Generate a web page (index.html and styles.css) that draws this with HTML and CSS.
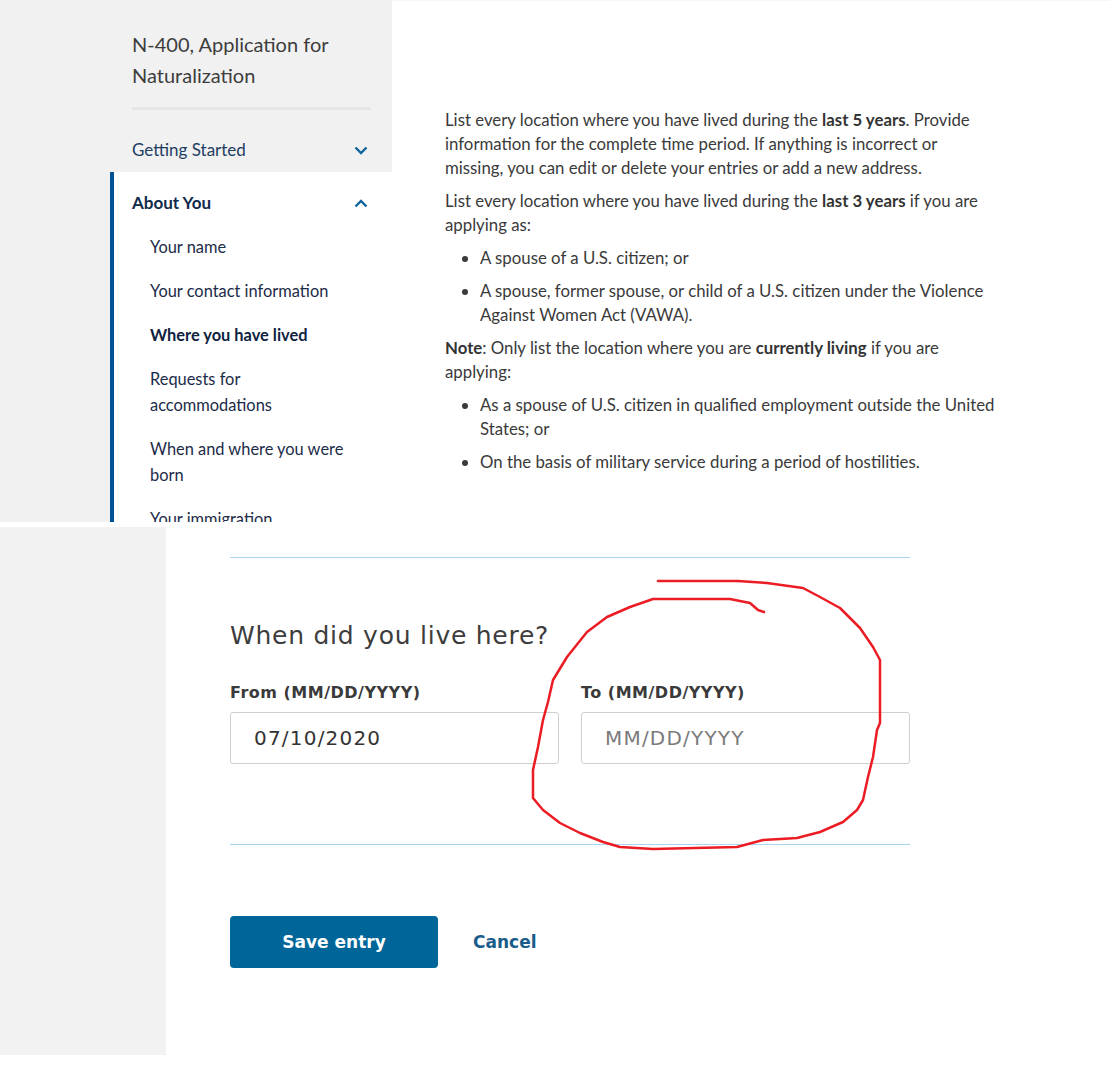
FILE: index.html
```html
<!DOCTYPE html>
<html lang="en">

<head>
    <meta charset="utf-8" />
    <meta name="viewport" content="width=device-width, initial-scale=1.0" />
    <title>N-400, Application for Naturalization</title>
    <link rel="stylesheet" href="styles.css">
</head>

<body>
    <div class="page">
        <!-- Верхняя часть: навигация и инструкция -->
        <div class="intro">
            <aside class="sidebar">
                <div class="sidebar__head">
                    <h1 class="sidebar__title">N-400, Application for Naturalization</h1>
                    <div class="sidebar__rule"></div>
                </div>

                <div class="nav-row nav-row--closed">
                    <span>Getting Started</span>
                    <svg class="chevron" width="14" height="9" viewBox="0 0 14 9">
                        <path d="M1.5 1.5 L7 7 L12.5 1.5" />
                    </svg>
                </div>

                <div class="nav-section">
                    <div class="nav-row nav-row--open">
                        <span>About You</span>
                        <svg class="chevron" width="14" height="9" viewBox="0 0 14 9">
                            <path d="M1.5 7.5 L7 2 L12.5 7.5" />
                        </svg>
                    </div>
                    <ul class="nav-sub">
                        <li>Your name</li>
                        <li>Your contact information</li>
                        <li class="is-current">Where you have lived</li>
                        <li>Requests for accommodations</li>
                        <li>When and where you were born</li>
                        <li>Your immigration information</li>
                    </ul>
                </div>
            </aside>

            <main class="intro-text">
                <div class="intro-text__body">
                    <p>List every location where you have lived during the <b>last 5 years</b>. Provide information for
                        the complete time period. If anything is incorrect or missing, you can edit or delete your
                        entries or add a new address.</p>
                    <p>List every location where you have lived during the <b>last 3 years</b> if you are applying as:
                    </p>
                    <ul>
                        <li>A spouse of a U.S. citizen; or</li>
                        <li>A spouse, former spouse, or child of a U.S. citizen under the Violence Against Women Act
                            (VAWA).</li>
                    </ul>
                    <p><b>Note</b>: Only list the location where you are <b>currently living</b> if you are applying:
                    </p>
                    <ul>
                        <li>As a spouse of U.S. citizen in qualified employment outside the United States; or</li>
                        <li>On the basis of military service during a period of hostilities.</li>
                    </ul>
                </div>
            </main>
        </div>

        <!-- Нижняя часть: форма дат -->
        <div class="entry">
            <div class="entry__side"></div>
            <form class="entry__form">
                <div class="entry__rule"></div>
                <h2 class="entry__title">When did you live here?</h2>
                <div class="date-grid">
                    <div class="date-field">
                        <label class="date-label" for="fromDate">From (MM/DD/YYYY)</label>
                        <input type="text" id="fromDate" class="date-input" value="07/10/2020">
                    </div>
                    <div class="date-field">
                        <label class="date-label" for="toDate">To (MM/DD/YYYY)</label>
                        <input type="text" id="toDate" class="date-input" placeholder="MM/DD/YYYY">
                    </div>
                </div>
                <div class="entry__rule entry__rule--bottom"></div>
                <div class="entry__actions">
                    <button type="button" class="btn-save">Save entry</button>
                    <a href="#" class="btn-cancel">Cancel</a>
                </div>
            </form>
        </div>

        <!-- Красная пометка поверх скриншота -->
        <svg class="annotation" width="1110" height="1092" viewBox="0 0 1110 1092">
            <path d="M658 581 L738 581 L767 583 L803 588 L820 597 L840 608 L860 628 L873 647 L880 660 L880 723
                     L877 730 L873 757 L868 777 L863 800 L857 810 L843 822 L820 832 L797 838 L763 840 L737 847
                     L653 849 L620 847 L603 842 L580 833 L560 823 L543 810 L533 798 L533 770 L538 747 L543 720
                     L548 702 L553 680 L567 657 L587 632 L607 617 L630 607 L653 599 L730 599 L750 603 L758 610
                     L764 612" />
        </svg>
    </div>
</body>

</html>
```

FILE: styles.css
```css
/* Общие стили */
body {
    margin: 0;
    font-family: Lato, 'Noto Sans', sans-serif;
    color: #333;
    background-color: #ffffff;
}

.page {
    position: relative;
    width: 1110px;
}

/* Верхняя часть */
.intro {
    display: flex;
    height: 522px;
    overflow: hidden;
}

.sidebar {
    width: 392px;
    flex-shrink: 0;
    display: flex;
    flex-direction: column;
    background-color: #f1f1f1;
}

.sidebar__head {
    padding: 29px 21px 0 132px;
}

.sidebar__title {
    margin: 0;
    font-size: 20px;
    font-weight: 400;
    line-height: 31px;
    color: #3d3d3d;
}

.sidebar__rule {
    height: 3px;
    margin-top: 16px;
    background-color: #e6e6e6;
}

.nav-row {
    display: flex;
    justify-content: space-between;
    align-items: center;
    font-size: 17px;
    line-height: 26px;
    color: #1f3d61;
}

.nav-row--closed {
    padding: 27px 24px 9px 132px;
}

.nav-row--open {
    font-weight: 700;
    color: #0f2a4a;
}

.chevron path {
    fill: none;
    stroke: #11639c;
    stroke-width: 2.4;
}

.nav-section {
    flex: 1;
    margin-left: 110px;
    padding: 18px 24px 0 18px;
    background-color: #ffffff;
    border-left: 4px solid #005495;
}

.nav-sub {
    list-style: none;
    margin: 0;
    padding: 0 13px 0 18px;
}

.nav-sub li {
    margin-top: 18px;
    font-size: 16.4px;
    line-height: 26px;
    color: #1c2b48;
}

.nav-sub li.is-current {
    font-weight: 700;
    color: #0f2240;
}

.intro-text {
    flex: 1;
    padding: 107px 0 0 53px;
    border-top: 1px solid #f6f6f6;
}

.intro-text__body {
    width: 553px;
    font-size: 16.8px;
    line-height: 24px;
    color: #3a3a3a;
}

.intro-text p {
    margin: 0 0 9px;
}

.intro-text ul {
    margin: 0;
    padding-left: 35px;
}

.intro-text li {
    margin-bottom: 9px;
}

.intro-text b {
    color: #333;
}

/* Нижняя часть */
.entry {
    display: flex;
    height: 528px;
    margin-top: 5px;
}

.entry__side {
    width: 166px;
    flex-shrink: 0;
    background-color: #f2f2f2;
}

.entry__form {
    width: 680px;
    padding: 30px 0 0 64px;
    font-family: 'DejaVu Sans', Verdana, sans-serif;
    color: #3a3a3a;
}

.entry__rule {
    height: 1px;
    background-color: #a8d5f2;
}

.entry__rule--bottom {
    margin-top: 80px;
}

.entry__title {
    margin: 62px 0 31px;
    font-size: 25px;
    font-weight: 400;
    line-height: 32px;
    letter-spacing: 0.75px;
    color: #3d3d3d;
}

.date-grid {
    display: grid;
    grid-template-columns: 1fr 1fr;
    gap: 22px;
}

.date-label {
    display: block;
    margin-bottom: 9px;
    font-size: 16px;
    font-weight: 700;
    line-height: 20px;
    letter-spacing: 0.5px;
    color: #3a3a3a;
}

.date-input {
    width: 100%;
    height: 52px;
    padding: 0 23px;
    box-sizing: border-box;
    font-family: 'DejaVu Sans', Verdana, sans-serif;
    font-size: 20px;
    letter-spacing: 1.2px;
    color: #333;
    border: 1px solid #cfcfcf;
    border-radius: 3px;
}

.date-input::placeholder {
    color: #7a7a7a;
}

.entry__actions {
    display: flex;
    align-items: center;
    gap: 35px;
    margin-top: 71px;
}

.btn-save {
    width: 208px;
    height: 52px;
    font-family: 'DejaVu Sans', Verdana, sans-serif;
    font-size: 17px;
    font-weight: 700;
    color: #fff;
    background-color: #006699;
    border: none;
    border-radius: 4px;
}

.btn-cancel {
    font-size: 17px;
    font-weight: 700;
    color: #1a5c8a;
    text-decoration: none;
}

/* Пометка от руки */
.annotation {
    position: absolute;
    top: 0;
    left: 0;
    pointer-events: none;
}

.annotation path {
    fill: none;
    stroke: #ec1c24;
    stroke-width: 2.5;
    stroke-linejoin: round;
    stroke-linecap: round;
}
```
